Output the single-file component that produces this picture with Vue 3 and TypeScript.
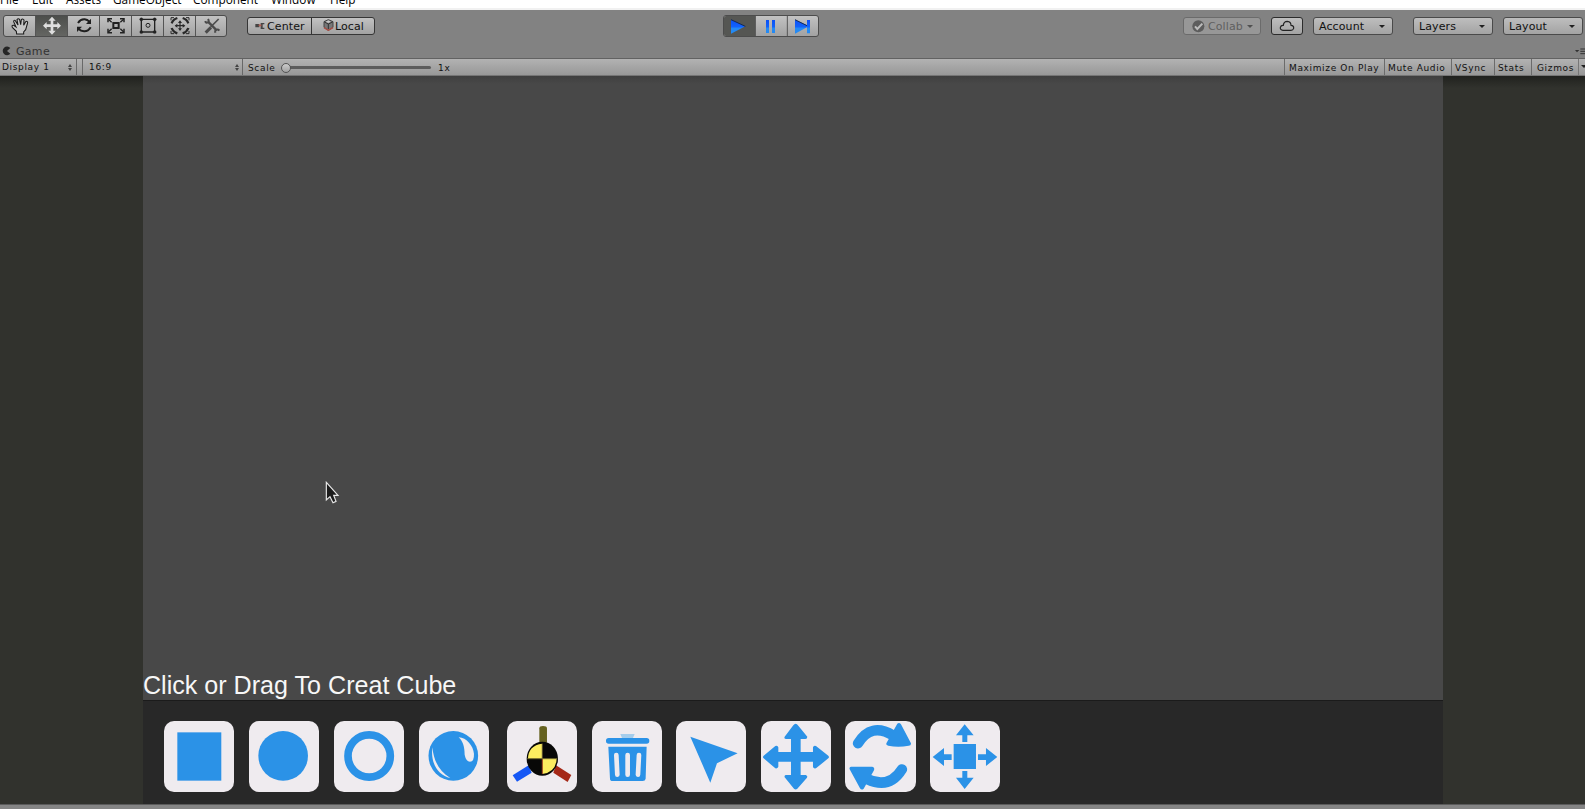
<script setup lang="ts">
const menus = [
  { label: 'File', w: 32 }, { label: 'Edit', w: 34 }, { label: 'Assets', w: 47 },
  { label: 'GameObject', w: 80 }, { label: 'Component', w: 78 }, { label: 'Window', w: 59 }, { label: 'Help', w: 40 },
]
const tools = ['hand', 'move', 'rotate', 'scale', 'rect', 'transform', 'custom']
const toggles = [
  { label: 'Maximize On Play', cls: 'max' }, { label: 'Mute Audio', cls: 'mute' },
  { label: 'VSync', cls: 'vsync' }, { label: 'Stats', cls: 'stats' }, { label: 'Gizmos', cls: 'gizmos' },
]
const cards = ['cube', 'disc', 'ring', 'sphere', 'axes', 'trash', 'select', 'move', 'rotate', 'scale']
</script>

<template>
  <div class="editor">
    <nav class="menu"><span v-for="m in menus" :key="m.label" :style="{ width: m.w + 'px' }">{{ m.label }}</span></nav>

    <header class="toolbar">
      <div class="group tools">
        <button v-for="t in tools" :key="t" :class="{ on: t === 'move' }">
          <svg viewBox="0 0 96 66" width="32" height="22">
            <path v-if="t === 'hand'" d="M38 57 L37 49 L25 37 Q22 30 29 31 L36 36 L29 20 Q29 14 34 17 L42 30 L39 14 Q43 8 47 14 L50 29 L52 14 Q56 9 60 15 L59 31 L65 20 Q71 17 71 23 L65 44 L59 51 L59 57 Z" fill="#c6c6c6" stroke="#1c1c1c" stroke-width="3.2" />
            <path v-else-if="t === 'move'" d="M48 5 L59 17 H52 V28 H64 V21 L75 32 L64 43 V36 H52 V47 H59 L48 59 L37 47 H44 V36 H32 V43 L21 32 L32 21 V28 H44 V17 H37 Z" fill="#dedede" />
            <g v-else-if="t === 'rotate'" fill="none" stroke="#202020" stroke-width="6">
              <path d="M30 24 Q38 12 50 13 Q58 14 64 20" /><path d="M68 37 Q60 50 48 49 Q38 48 32 42" />
              <path d="M69 11 V27 H54 Z M27 51 V35 H42 Z" fill="#202020" stroke="none" />
            </g>
            <g v-else-if="t === 'scale'" fill="none" stroke="#222" stroke-width="4">
              <path d="M40 24 H56 V39 H40 Z" stroke-width="6" />
              <path d="M25 13 L35 22 M71 13 L61 22 M25 51 L35 41 M71 51 L61 41" />
              <path d="M24 22 V11 H36 M60 11 H72 V22 M24 41 V53 H36 M60 53 H72 V41" stroke-width="4.5" />
            </g>
            <g v-else-if="t === 'rect'" fill="#222" stroke="#222">
              <path d="M28 13 H68 V51 H28 Z" fill="none" stroke-width="4" />
              <circle v-for="(p, i) in [[28, 13], [68, 13], [28, 51], [68, 51]]" :key="i" :cx="p[0]" :cy="p[1]" r="4.8" />
              <circle cx="48" cy="31" r="6" fill="none" stroke-width="3" />
            </g>
            <g v-else-if="t === 'transform'" fill="none" stroke="#292929" stroke-width="3.5">
              <path d="M48 20 V44 M35 32 H61" />
              <path d="M42 24 L48 16 L54 24 Z M42 40 L48 48 L54 40 Z M40 26 L32 32 L40 38 Z M56 26 L64 32 L56 38 Z" fill="#292929" stroke="none" />
              <path d="M23 25 Q27 13 40 9 M56 9 Q69 13 73 25 M23 39 Q27 51 40 55 M56 55 Q69 51 73 39" stroke-width="7" />
              <path d="M21 16 V8 H30 M66 8 H75 V16 M21 48 V56 H30 M66 56 H75 V48" stroke-width="3" />
            </g>
            <g v-else stroke="#4b4b4b" fill="none">
              <path d="M36 20 L62 46" stroke-width="7" /><path d="M68 12 L44 36" stroke-width="5" />
              <path d="M29 53 L45 37" stroke-width="9" />
              <path d="M28 18 Q29 25 36 22 Q40 18 36 12 M58 53 Q56 45 62 44 Q67 43 70 47" stroke-width="6" />
            </g>
          </svg>
        </button>
      </div>

      <div class="group pivot">
        <button class="center">
          <svg width="10" height="8" viewBox="0 0 30 24"><path d="M1 6 H13 V16 H1 Z M17 3 H28 V7 H23 V17 H28 V21 H17 Z" fill="#444" /><path d="M11 10 H19" stroke="#b65c50" stroke-width="5" /></svg>
          <span>Center</span>
        </button>
        <button class="local">
          <svg width="11" height="12" viewBox="0 0 33 36"><path d="M16 2 L30 8 V25 L16 34 L3 25 V8 Z" fill="#777" stroke="#444" stroke-width="3" /><path d="M4 9 L16 15 L29 9 M16 15 V30" fill="none" stroke="#333" stroke-width="3" /><path d="M8 8 L16 4 L24 8 L16 12 Z" fill="#c8c8c8" /><path d="M3 26 L16 34 L30 26" fill="none" stroke="#a94e45" stroke-width="4" /></svg>
          <span>Local</span>
        </button>
      </div>

      <div class="group play">
        <svg class="playicons" width="96" height="22" viewBox="0 0 288 66">
          <defs>
            <linearGradient id="blue" x1="0" y1="14" x2="0" y2="55" gradientUnits="userSpaceOnUse"><stop offset="0" stop-color="#0b50f5" /><stop offset=".5" stop-color="#1261fa" /><stop offset=".65" stop-color="#238af5" /><stop offset="1" stop-color="#238af5" /></linearGradient>
          </defs>
          <rect class="active" width="97" height="66" />
          <path d="M97 0 V66 M193 0 V66" stroke="#555" stroke-width="3" />
          <g fill="url(#blue)">
            <path d="M24 14 L67 34 L24 56 Z" /><path d="M129 15 H138 V54 H129 Z M147 15 H156 V54 H147 Z" />
            <path d="M216 14 L252 31 V15 H261 V55 H252 V37 L216 56 Z" />
          </g>
          <path d="M24 14 L67 34 M216 14 L252 32" stroke="#122a55" stroke-width="3" />
        </svg>
      </div>

      <div class="right">
        <button class="btn collab"><svg width="13" height="13" viewBox="0 0 39 39"><circle cx="19" cy="19" r="18" fill="#5d5d5d" /><path d="M9 19 L16 27 L31 11" fill="none" stroke="#bcbcbc" stroke-width="6" /></svg><span>Collab</span><i></i></button>
        <button class="btn cloud"><svg width="16" height="12" viewBox="0 0 48 36"><path d="M12 31 Q3 30 4 22 Q6 15 13 16 Q14 4 25 4 Q36 5 36 16 Q45 17 44 25 Q42 31 36 31 Z" fill="none" stroke="#222" stroke-width="3.5" /></svg></button>
        <button class="btn account"><span>Account</span><i></i></button>
        <button class="btn layers"><span>Layers</span><i></i></button>
        <button class="btn layout"><span>Layout</span><i></i></button>
      </div>
    </header>

    <div class="tabs">
      <svg width="9" height="10" viewBox="0 0 27 30"><path d="M25 6 A13 13 0 1 0 25 23 L15 15 Z" fill="#252525" /></svg>
      <span>Game</span>
      <svg class="opts" width="10" height="7" viewBox="0 0 30 21"><path d="M0 6 H13 L6 13 Z" fill="#333" /><path d="M16 3 H30 M16 10 H30 M16 17 H30" stroke="#333" stroke-width="3" /></svg>
    </div>

    <div class="gamebar">
      <div class="cell display"><span>Display 1</span><b class="ud"></b></div>
      <div class="cell aspect"><span>16:9</span><b class="ud"></b></div>
      <span class="zoomlabel">Scale</span>
      <div class="slider"><div class="knob"></div></div>
      <span class="one">1x</span>
      <div class="toggles">
        <div v-for="t in toggles" :key="t.label" :class="['toggle', t.cls]"><span>{{ t.label }}</span></div>
        <div class="drop"><i></i></div>
      </div>
    </div>

    <main class="game">
      <section class="view">
        <div class="scene">
          <p>Click or Drag To Creat Cube</p>
          <svg class="cursor" width="15" height="23" viewBox="0 0 45 69"><path d="M4 4 V57 L15 47 L24 65 L33 61 L26 43 H39 Z" fill="#1b1b1b" stroke="#e8e8e8" stroke-width="3.5" /></svg>
        </div>
        <div class="dock">
          <div v-for="c in cards" :key="c" :class="['card', c]">
            <svg viewBox="0 0 211 213">
              <rect v-if="c === 'cube'" x="40" y="34" width="132" height="145" />
              <circle v-else-if="c === 'disc'" cx="102.5" cy="104.5" r="74.5" />
              <circle v-else-if="c === 'ring'" cx="105.5" cy="105" r="63.5" fill="none" stroke="#2b92e7" stroke-width="23" />
              <template v-else-if="c === 'sphere'">
                <circle cx="103" cy="104.5" r="74.5" />
                <g fill="#efebef"><path d="M119 49 C143 50 163 75 165 98 Q166 122 153 122 Q141 121 137 101 C137 78 132 61 119 49 Z" /><path d="M40 79 C44 120 61 151 94 171 C60 164 34 130 40 79 Z" /></g>
              </template>
              <template v-else-if="c === 'axes'">
                <path d="M97 65 V22 Q97 15 108 15 Q120 15 120 22 V65 Z" fill="#65611f" />
                <path d="M17 163 L65 133 L74 155 L30 182 Z" fill="#1557f5" /><path d="M147 133 L193 162 L182 183 L139 155 Z" fill="#a52817" />
                <ellipse cx="106" cy="113" rx="47" ry="51" fill="#080807" />
                <path d="M106 68 V113 H63 Q64 73 106 68 Z M106 113 H149 Q147 154 106 159 Z" fill="#fbed60" />
                <path d="M106 68 V113" stroke="#554b2b" stroke-width="3" /><path d="M106 113 V159" stroke="#a54522" stroke-width="3" /><path d="M61 113 H151" stroke="#6e682e" stroke-width="3" />
              </template>
              <template v-else-if="c === 'trash'">
                <path d="M85 39 H128 L123 51 H90 Z" fill="#a5cdec" />
                <rect x="42" y="51" width="130" height="17" rx="8" />
                <path d="M49 77 H164 L161 173 Q160 180 152 180 H62 Q54 180 54 173 Z" />
                <path d="M73 102 L76 161 M107 102 V161 M141 102 L138 161" stroke="#efebef" stroke-width="14" stroke-linecap="round" />
              </template>
              <path v-else-if="c === 'select'" d="M43 47 L185 97 L123 127 L103 185 Z" />
              <path v-else-if="c === 'move'" d="M104 8 Q108 8 112 14 L139 47 Q139 54 133 54 H119 V93 H156 V79 Q158 72 165 75 L202 104 Q206 108 202 112 L165 142 Q157 144 156 137 V122 H119 V162 H134 Q141 164 138 170 L109 203 Q104 208 99 203 L71 169 Q69 162 76 162 H90 V122 H52 V137 Q49 144 43 142 L8 112 Q4 108 8 104 L43 75 Q50 72 52 79 V93 H90 V54 H76 Q68 53 71 47 L97 13 Q100 8 104 8 Z" />
              <template v-else-if="c === 'rotate'">
                <path d="M39 67 Q78 3 144 43 M171 145 Q133 206 66 174" fill="none" stroke="#2b92e7" stroke-width="31" stroke-linecap="round" />
                <path d="M157 8 Q163 3 168 10 L198 67 Q199 74 191 74 Q160 80 130 74 Q121 72 125 65 Z M18 137 H82 Q90 139 87 148 L56 203 Q50 209 45 202 L14 145 Q12 137 18 137 Z" />
              </template>
              <path v-else d="M71 69 H138 V144 H71 Z M104 10 L131 43 H112 V63 H97 V43 H78 Z M104 204 L131 170 H112 V150 H97 V170 H78 Z M8 108 L42 81 V100 H65 V117 H42 V135 Z M202 108 L168 81 V100 H144 V117 H168 V135 Z" />
            </svg>
          </div>
        </div>
      </section>
    </main>
    <footer class="status"></footer>
  </div>
</template>

<style>
body { margin: 0; overflow: hidden; }
</style>
<style scoped>
* { box-sizing: border-box; }
.editor { width: 1585px; height: 809px; overflow: hidden; display: flex; flex-direction: column; background: #828282; font-family: "DejaVu Sans", sans-serif; color: #111; }
button { padding: 0; margin: 0; border: 0; background: none; font: inherit; letter-spacing: inherit; color: inherit; }
svg { display: block; flex: none; }
.menu { height: 10px; flex: none; display: flex; align-items: flex-end; overflow: hidden; background: #fff; border-bottom: 2px solid #f1f1f1; font: 11.8px/16px "Open Sans", sans-serif; color: #000; }
.menu span { height: 17px; white-space: nowrap; }
.toolbar { height: 33px; flex: none; display: flex; padding-top: 5px; font-size: 11px; letter-spacing: .1px; }
.group { display: flex; border: 1px solid #4c4c4c; border-radius: 3px; overflow: hidden; background: linear-gradient(#c2c2c2, #a2a2a2); }
.tools { width: 224px; height: 22px; margin-left: 3px; }
.tools button { width: 32px; flex: none; border-right: 1px solid #555; }
.tools button:last-child { border: 0; }
.tools svg { margin: -1px 0 0 -.5px; }
.tools .on { background: linear-gradient(#4c4e4b, #646562); }
.pivot { width: 128px; height: 18px; margin: 2px 0 0 20px; border-color: #363636; }
.pivot button { display: flex; align-items: center; }
.pivot .center { width: 64px; border-right: 1px solid #333; padding-left: 7px; }
.center span { margin-left: 2px; }
.pivot .local { padding-left: 11px; }
.local svg { margin-top: -2px; }
.local span { margin-left: 1px; }
.play { width: 96px; height: 22px; margin-left: 348px; }
.playicons { margin: -1px; }
.active { fill: #555653; }
.right { margin: 2px 2px 0 auto; display: flex; }
.btn { height: 18px; border: 1px solid #4a4a4a; border-radius: 3px; background: linear-gradient(#bebebe, #a3a3a3); display: flex; align-items: center; padding: 0 7px 0 5px; }
i { display: block; border: 3px solid transparent; border-top-color: #202020; border-bottom: 0; }
.btn i { margin-left: auto; }
.collab { width: 78px; background: #979797; border-color: #6b6b6b; color: #5f5f5f; padding-left: 8px; }
.collab span { margin-left: 3px; }
.collab i { border-top-color: #505050; }
.cloud { width: 32px; margin-left: 10px; padding: 0 0 0 7px; border-color: #2c2c2c; }
.account { width: 80px; margin-left: 10px; }
.layers { width: 80px; margin-left: 20px; }
.layout { width: 80px; margin-left: 10px; }
.tabs { height: 15px; flex: none; display: flex; align-items: center; padding: 1px 0 0 2px; font-size: 11px; line-height: 15px; letter-spacing: .3px; color: #333; }
.tabs span { margin-left: 5px; }
.opts { margin-left: auto; }
.gamebar { height: 18px; flex: none; display: flex; border-top: 1px solid #626262; border-bottom: 1px solid #757575; background: linear-gradient(#b2b2b2, #989898); font-size: 9px; line-height: 18px; white-space: nowrap; letter-spacing: .65px; }
.gamebar span { display: block; }
.cell { display: flex; align-items: center; justify-content: space-between; border-right: 1px solid #686868; }
.display { width: 77px; padding: 0 4px 0 2px; }
.aspect { width: 161px; margin-left: 5px; border-left: 1px solid #686868; padding: 0 3px 0 6px; }
.ud::before, .ud::after { content: ""; display: block; border: 2.5px solid transparent; }
.ud::before { border-bottom: 3px solid #444; border-top: 0; }
.ud::after { border-top: 3px solid #444; border-bottom: 0; margin-top: 1px; }
.zoomlabel { width: 38px; padding-left: 5px; }
.slider { width: 149px; margin-top: 7px; margin-left: 1px; height: 3px; border-radius: 2px; background: #5c5c5c; display: flex; align-items: center; }
.knob { width: 10px; height: 10px; flex: none; margin-left: -1px; border: 1px solid #545454; border-radius: 50%; background: linear-gradient(#ccc, #a1a1a1); }
.one { margin-left: 7px; }
.toggles { display: flex; margin-left: auto; }
.toggle { border-left: 1px solid #6b6b6b; padding-left: 4px; }
.max { width: 100px; } .mute { width: 67px; padding-left: 3px; } .vsync { width: 43px; padding-left: 3px; }
.stats { width: 37px; padding-left: 3px; } .gizmos { width: 47px; padding-left: 5px; }
.drop { width: 7px; border-left: 1px solid #777; padding: 6px 0 0 2px; overflow: hidden; }
.game { height: 728px; flex: none; padding: 0 142px 0 143px; background: linear-gradient(#20211e, #31322d 12px); }
.view { height: 728px; display: flex; flex-direction: column; }
.scene { height: 625px; background: linear-gradient(#3f3f3f, #484848 8px); position: relative; display: flex; align-items: flex-end; border-bottom: 1px solid #1b1b1b; }
.scene p { margin: 0; font: 25.1px/30px "Liberation Sans", sans-serif; color: #f7f7f7; white-space: nowrap; }
.cursor { position: absolute; left: 182px; top: 405px; }
.dock { height: 103px; background: #282828; padding: 20px 0 0 21px; display: flex; gap: 14.3px; }
.card { width: 70.3px; height: 71px; border-radius: 10px; background: #efebef; flex: none; }
.card svg { width: 70.3px; height: 71px; fill: #2b92e7; }
.disc, .ring, .sphere { margin-left: .4px; }
.axes { margin-left: 3.4px; }
.status { height: 5px; border-top: 1px solid #5b5b5b; background: #858585; }
</style>
